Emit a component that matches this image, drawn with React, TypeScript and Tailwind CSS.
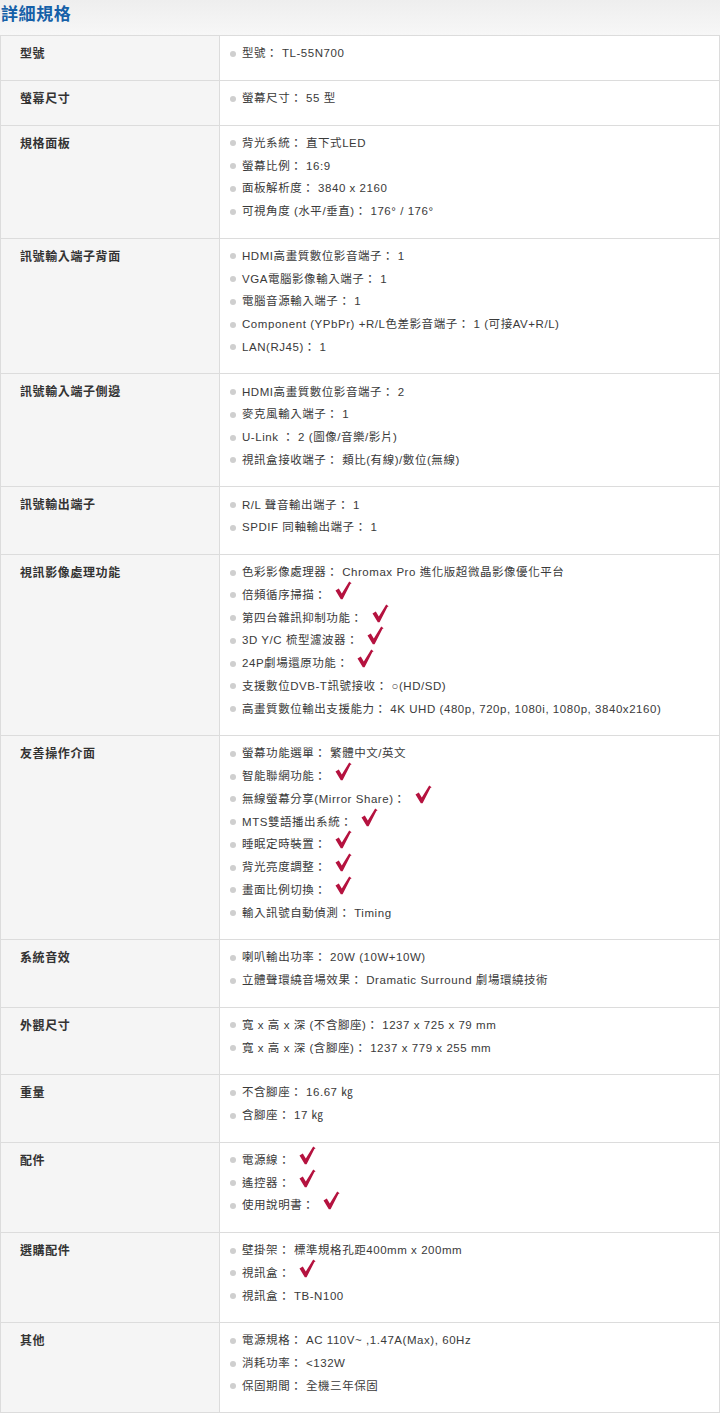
import React from "react";

const CHECK = "✓";

type Row = { label: string; items: string[] };

const rows: Row[] = [
  { label: "型號", items: ["型號： TL-55N700"] },
  { label: "螢幕尺寸", items: ["螢幕尺寸： 55 型"] },
  {
    label: "規格面板",
    items: ["背光系統： 直下式LED", "螢幕比例： 16:9", "面板解析度： 3840 x 2160", "可視角度 (水平/垂直)： 176° / 176°"],
  },
  {
    label: "訊號輸入端子背面",
    items: [
      "HDMI高畫質數位影音端子： 1",
      "VGA電腦影像輸入端子： 1",
      "電腦音源輸入端子： 1",
      "Component (YPbPr) +R/L色差影音端子： 1 (可接AV+R/L)",
      "LAN(RJ45)： 1",
    ],
  },
  {
    label: "訊號輸入端子側邊",
    items: ["HDMI高畫質數位影音端子： 2", "麥克風輸入端子： 1", "U-Link ： 2 (圖像/音樂/影片)", "視訊盒接收端子： 類比(有線)/數位(無線)"],
  },
  { label: "訊號輸出端子", items: ["R/L 聲音輸出端子： 1", "SPDIF 同軸輸出端子： 1"] },
  {
    label: "視訊影像處理功能",
    items: [
      "色彩影像處理器： Chromax Pro 進化版超微晶影像優化平台",
      "倍頻循序掃描：" + CHECK,
      "第四台雜訊抑制功能：" + CHECK,
      "3D Y/C 梳型濾波器：" + CHECK,
      "24P劇場還原功能：" + CHECK,
      "支援數位DVB-T訊號接收： ○(HD/SD)",
      "高畫質數位輸出支援能力： 4K UHD (480p, 720p, 1080i, 1080p, 3840x2160)",
    ],
  },
  {
    label: "友善操作介面",
    items: [
      "螢幕功能選單： 繁體中文/英文",
      "智能聯網功能：" + CHECK,
      "無線螢幕分享(Mirror Share)：" + CHECK,
      "MTS雙語播出系統：" + CHECK,
      "睡眠定時裝置：" + CHECK,
      "背光亮度調整：" + CHECK,
      "畫面比例切換：" + CHECK,
      "輸入訊號自動偵測： Timing",
    ],
  },
  { label: "系統音效", items: ["喇叭輸出功率： 20W (10W+10W)", "立體聲環繞音場效果： Dramatic Surround 劇場環繞技術"] },
  { label: "外觀尺寸", items: ["寬 x 高 x 深 (不含腳座)： 1237 x 725 x 79 mm", "寬 x 高 x 深 (含腳座)： 1237 x 779 x 255 mm"] },
  { label: "重量", items: ["不含腳座： 16.67 ㎏", "含腳座： 17 ㎏"] },
  { label: "配件", items: ["電源線：" + CHECK, "遙控器：" + CHECK, "使用說明書：" + CHECK] },
  { label: "選購配件", items: ["壁掛架： 標準規格孔距400mm x 200mm", "視訊盒：" + CHECK, "視訊盒： TB-N100"] },
  { label: "其他", items: ["電源規格： AC 110V~ ,1.47A(Max), 60Hz", "消耗功率： <132W", "保固期間： 全機三年保固"] },
];

function Check() {
  return (
    <svg width="17" height="19" viewBox="0 0 17 19" className="inline-block ml-[9px] relative top-[-5px] align-middle">
      <path d="M0.5 9.5 L3.8 7.6 L6.8 12.4 L14.2 0.6 L16.6 2.2 L15.4 3 L7.6 18.2 L5.8 18.2 Z" fill="#b5123f" />
    </svg>
  );
}

function Item({ text }: { text: string }) {
  const hasCheck = text.endsWith(CHECK);
  const t = hasCheck ? text.slice(0, -1) : text;
  return (
    <li className="flex items-center h-[22.75px]">
      <span className="w-[6px] h-[6px] rounded-full bg-[#cfcfcf] ml-[10px] mr-[6px] shrink-0" />
      <span className="whitespace-nowrap">{t}</span>
      {hasCheck && <Check />}
    </li>
  );
}

export default function App() {
  return (
    <div className="w-[720px] bg-white" style={{ fontFamily: '"Liberation Sans", Arial, "Noto Sans CJK TC", sans-serif' }}>
      <div className="h-[35px] bg-gradient-to-b from-[#eeeeee] to-[#f7f7f7] flex items-start pl-[1px] pt-[3px]">
        <h2 className="text-[17px] font-bold text-[#1560a8] tracking-[0.6px] leading-[24px]">詳細規格</h2>
      </div>
      <div className="border-l border-r border-t border-[#dcdcdc]">
        {rows.map((r) => (
          <div key={r.label} className="flex border-b border-[#dcdcdc]">
            <div className="w-[219px] shrink-0 bg-[#f5f5f5] border-r border-[#dcdcdc] pl-[19px] pt-[7px] text-[12px] font-bold text-[#333] tracking-[0.6px] leading-[22.75px]">
              {r.label}
            </div>
            <ul className="flex-1 pt-[6.5px] pb-[14.5px] text-[11.5px] text-[#3a3a3a] tracking-[0.55px]">
              {r.items.map((it, i) => (
                <Item key={i} text={it} />
              ))}
            </ul>
          </div>
        ))}
      </div>
    </div>
  );
}
